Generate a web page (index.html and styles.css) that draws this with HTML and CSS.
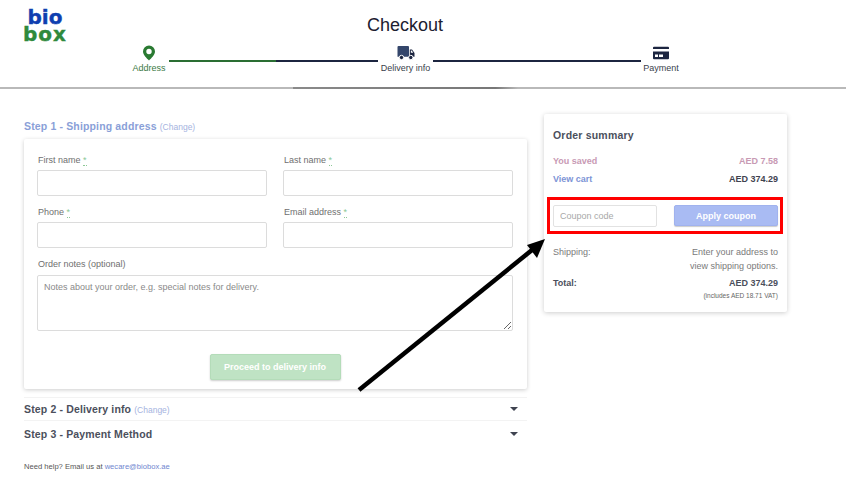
FILE: index.html
```html
<!DOCTYPE html>
<html lang="en">
  <head>
    <meta charset="UTF-8" />
    <title>Checkout</title>
    <link rel="stylesheet" href="styles.css">
  </head>
  <body>
    <header class="site-header">
      <div class="logo">
        <span class="logo-bio">bio</span>
        <span class="logo-box">box</span>
      </div>
      <h1 class="page-title">Checkout</h1>
      <div class="stepper">
        <div class="step step-address">
          <svg class="step-icon" width="14" height="16" viewBox="0 0 14 16">
            <path fill="#2a7a32" fill-rule="evenodd" d="M7 0.500a6 6 0 0 0-6 6c0 3.600 3.800 6.700 6 9 2.200-2.300 6-5.400 6-9a6 6 0 0 0-6-6zM7 3.800a2.700 2.700 0 1 1 0 5.400a2.700 2.700 0 0 1 0-5.400z"/>
          </svg>
          <span class="step-label">Address</span>
        </div>
        <div class="step-line step-line-active"></div>
        <div class="step step-delivery">
          <svg class="step-icon" width="18" height="15" viewBox="0 0 18 15">
            <path fill="#34466b" d="M0.500 1.500a1 1 0 0 1 1-1h9.500a1 1 0 0 1 1 1v9.800h-11.500z"/>
            <path fill="#1c2540" d="M12.800 4h2.200l2.500 3.400v3.900h-4.700z"/>
            <path fill="#fff" d="M13.800 5h0.900l1.500 2.200h-2.400z"/>
            <circle cx="4.500" cy="12" r="2.200" fill="#1c2540" stroke="#fff" stroke-width="1"/>
            <circle cx="13.800" cy="12" r="2.200" fill="#1c2540" stroke="#fff" stroke-width="1"/>
          </svg>
          <span class="step-label">Delivery info</span>
        </div>
        <div class="step-line"></div>
        <div class="step step-payment">
          <svg class="step-icon" width="16" height="15" viewBox="0 0 16 15">
            <path fill="#1c2540" d="M0 2.200a1 1 0 0 1 1-1h14a1 1 0 0 1 1 1v1.300h-16zM0 6h16v6.800a1 1 0 0 1-1 1h-14a1 1 0 0 1-1-1z"/>
            <rect x="2" y="9" width="3" height="2.500" fill="#fff"/>
            <rect x="6" y="9" width="4" height="2.500" fill="#fff"/>
          </svg>
          <span class="step-label">Payment</span>
        </div>
      </div>
    </header>

    <main class="checkout">
      <section class="checkout-left">
        <h2 class="step-title step-title-current">Step 1 - Shipping address <a class="change-link">(Change)</a></h2>
        <form class="address-card">
          <div class="field-row">
            <label class="field">
              <span class="field-label">First name <abbr class="req">*</abbr></span>
              <input class="text-input" type="text" />
            </label>
            <label class="field">
              <span class="field-label">Last name <abbr class="req">*</abbr></span>
              <input class="text-input" type="text" />
            </label>
          </div>
          <div class="field-row">
            <label class="field">
              <span class="field-label">Phone <abbr class="req">*</abbr></span>
              <input class="text-input" type="text" />
            </label>
            <label class="field">
              <span class="field-label">Email address <abbr class="req">*</abbr></span>
              <input class="text-input" type="text" />
            </label>
          </div>
          <label class="field">
            <span class="field-label">Order notes (optional)</span>
            <textarea class="notes-input" placeholder="Notes about your order, e.g. special notes for delivery."></textarea>
          </label>
          <div class="form-actions">
            <button class="proceed-btn" type="button">Proceed to delivery info</button>
          </div>
        </form>

        <div class="collapsed-step">
          <h2 class="step-title">Step 2 - Delivery info <a class="change-link">(Change)</a></h2>
          <span class="caret"></span>
        </div>
        <div class="collapsed-step collapsed-step-last">
          <h2 class="step-title">Step 3 - Payment Method</h2>
          <span class="caret"></span>
        </div>

        <p class="help-text">Need help? Email us at <a class="help-link">wecare@biobox.ae</a></p>
      </section>

      <aside class="summary-card">
        <h3 class="summary-title">Order summary</h3>
        <div class="summary-row summary-saved">
          <span>You saved</span>
          <span>AED 7.58</span>
        </div>
        <div class="summary-row summary-cart">
          <a class="view-cart">View cart</a>
          <span>AED 374.29</span>
        </div>
        <div class="coupon-row">
          <input class="coupon-input" type="text" placeholder="Coupon code" />
          <button class="coupon-btn" type="button">Apply coupon</button>
        </div>
        <div class="summary-row summary-shipping">
          <span>Shipping:</span>
          <span class="shipping-note">Enter your address to<br />view shipping options.</span>
        </div>
        <div class="summary-row summary-total">
          <span>Total:</span>
          <span class="total-amount">AED 374.29
            <small class="vat-note">(includes AED 18.71 VAT)</small>
          </span>
        </div>
      </aside>
    </main>

    <!-- annotation arrow drawn over the page -->
    <svg class="annotation-arrow" width="846" height="487" viewBox="0 0 846 487">
      <line x1="359" y1="390" x2="532" y2="250" stroke="#000" stroke-width="4.500"/>
      <polygon points="545,239 537,258 527,245" fill="#000"/>
    </svg>
  </body>
</html>
```

FILE: styles.css
```css
* {
  box-sizing: border-box;
}

body {
  margin: 0;
  height: 487px;
  overflow: hidden;
  background-color: #fff;
  font-family: "Liberation Sans", Arial, sans-serif;
  color: #3f4350;
}

/* header */
.site-header {
  position: relative;
  height: 89px;
  padding-top: 15px;
  border-bottom: 2px solid #b9b9b9;
}
.site-header::after {
  content: "";
  position: absolute;
  left: 293px;
  width: 225px;
  bottom: -2px;
  height: 2px;
  background: linear-gradient(90deg, #8a8a8a, #777 90%, #b9b9b9);
}
.logo {
  position: absolute;
  left: 24px;
  top: 9px;
  width: 42px;
  display: flex;
  flex-direction: column;
  align-items: center;
  font-family: "DejaVu Sans", sans-serif;
  font-weight: 700;
  line-height: 17px;
  font-size: 20px;
  -webkit-text-stroke: 0.4px currentColor;
}
.logo-bio {
  color: #0f3fb0;
}
.logo-box {
  color: #2f8a3c;
  letter-spacing: 1px;
}
.page-title {
  margin: 0;
  padding-right: 36px;
  text-align: center;
  font-size: 18px;
  font-weight: 400;
  line-height: 21px;
  color: #1c2030;
}
.stepper {
  display: flex;
  margin-top: 9px;
  padding-left: 129px;
}
.step {
  display: flex;
  flex-direction: column;
  align-items: center;
  flex: none;
}
.step-address,
.step-payment {
  width: 40px;
}
.step-delivery {
  width: 55px;
}
.step-icon {
  display: block;
  height: 16px;
}
.step-label {
  margin-top: 2px;
  font-size: 9px;
  line-height: 11px;
  white-space: nowrap;
  color: #3a3f4c;
}
.step-address .step-label {
  color: #3b7a45;
}
.step-line {
  flex: none;
  width: 208px;
  height: 2px;
  margin-top: 15px;
  background-color: #1c2540;
}
.step-line-active {
  width: 209px;
  background: linear-gradient(90deg, #2a6e33 51%, #1c2540 51%);
}

/* main layout */
.checkout {
  display: flex;
  gap: 17px;
  padding: 25px 0 0 24px;
  align-items: flex-start;
}
.checkout-left {
  width: 503px;
  padding-top: 5px;
}
.step-title {
  margin: 0;
  font-size: 10.500px;
  font-weight: 700;
  line-height: 14px;
  letter-spacing: 0.15px;
  color: #4b4f5c;
}
.step-title-current {
  color: #8a9fd8;
}
.change-link {
  font-size: 8.500px;
  font-weight: 400;
  letter-spacing: 0;
  color: #a5b3e0;
}

/* address form */
.address-card {
  margin-top: 5px;
  height: 250px;
  padding: 15px 14px 0 13px;
  background-color: #fff;
  border-radius: 2px;
  box-shadow: 0 1px 4px rgba(0, 0, 0, 0.2);
}
.field-row {
  display: flex;
  gap: 16px;
  margin-bottom: 10px;
}
.field {
  display: block;
  flex: 1;
}
.field-label {
  display: block;
  padding-left: 1px;
  font-size: 9px;
  line-height: 12px;
  color: #6f6f6f;
}
.req {
  color: #8cc896;
  border-bottom: 1px dotted #8cc896;
}
.text-input,
.notes-input {
  display: block;
  width: 100%;
  margin-top: 4px;
  border: 1px solid #dcdcdc;
  border-radius: 2px;
  background-color: #fff;
  font-family: inherit;
}
.text-input {
  height: 26px;
}
.notes-input {
  height: 56px;
  margin-top: 5px;
  padding: 6px 6px;
  font-size: 9px;
}
.notes-input::placeholder {
  color: #8a8a8a;
}
.form-actions {
  display: flex;
  justify-content: center;
  margin-top: 23px;
}
.proceed-btn {
  width: 131px;
  height: 26px;
  padding: 0;
  border: 1px solid #b4dcb9;
  border-radius: 2px;
  background-color: #bfe3c4;
  box-shadow: 0 1px 2px rgba(0, 0, 0, 0.2);
  font-family: inherit;
  font-size: 9px;
  font-weight: 700;
  color: #fff;
}

/* collapsed steps */
.collapsed-step {
  display: flex;
  align-items: center;
  justify-content: space-between;
  height: 24px;
  margin-top: 8px;
  padding-right: 8px;
  border-top: 1px solid #f3f3f3;
  border-bottom: 1px solid #f3f3f3;
}
.collapsed-step-last {
  margin-top: 0;
  height: 26px;
  border-top: none;
  border-bottom: none;
}
.caret {
  width: 0;
  height: 0;
  margin-right: 1px;
  border-left: 4px solid transparent;
  border-right: 4px solid transparent;
  border-top: 4px solid #3f4350;
}
.help-text {
  margin: 15px 0 0;
  font-size: 7.600px;
  line-height: 10px;
  color: #555;
}
.help-link {
  color: #6f86cf;
}

/* order summary */
.summary-card {
  width: 243px;
  height: 198px;
  padding: 15px 9px 0;
  background-color: #fff;
  border-radius: 2px;
  box-shadow: 0 1px 5px rgba(0, 0, 0, 0.2);
}
.summary-title {
  margin: 0 0 14px;
  font-size: 10.500px;
  font-weight: 700;
  line-height: 13px;
  letter-spacing: 0.2px;
  color: #4b4f5c;
}
.summary-row {
  display: flex;
  justify-content: space-between;
  font-size: 9px;
  line-height: 11px;
}
.summary-saved {
  font-weight: 700;
  color: #c89ab4;
}
.summary-cart {
  margin-top: 7px;
  font-weight: 700;
  color: #3f4350;
}
.view-cart {
  color: #7d94d6;
}
.coupon-row {
  display: flex;
  justify-content: space-between;
  align-items: flex-start;
  height: 37px;
  margin: 12px -5px 0 -6px;
  padding: 5px 2px 0 3px;
  border: 3px solid #f00;
}
.coupon-input {
  width: 104px;
  height: 22px;
  padding: 0 6px;
  border: 1px solid #e2e2e2;
  border-radius: 2px;
  font-family: inherit;
  font-size: 9px;
}
.coupon-input::placeholder {
  color: #a8a8a8;
}
.coupon-btn {
  width: 104px;
  height: 21px;
  padding: 0;
  border: 1px solid #a0b2ee;
  border-radius: 2px;
  background-color: #a9bbf3;
  box-shadow: 0 1px 1px rgba(0, 0, 0, 0.2);
  font-family: inherit;
  font-size: 9px;
  font-weight: 700;
  color: #fff;
}
.summary-shipping {
  margin-top: 12px;
  line-height: 13.500px;
  color: #7a7a7a;
}
.shipping-note {
  text-align: right;
}
.summary-total {
  margin-top: 5px;
  font-weight: 700;
  color: #4b4f5c;
}
.total-amount {
  text-align: right;
}
.vat-note {
  display: block;
  margin-top: 2px;
  font-size: 6.500px;
  line-height: 9px;
  font-weight: 400;
  color: #666;
}

/* annotation */
.annotation-arrow {
  position: absolute;
  left: 0;
  top: 0;
  pointer-events: none;
}
```
